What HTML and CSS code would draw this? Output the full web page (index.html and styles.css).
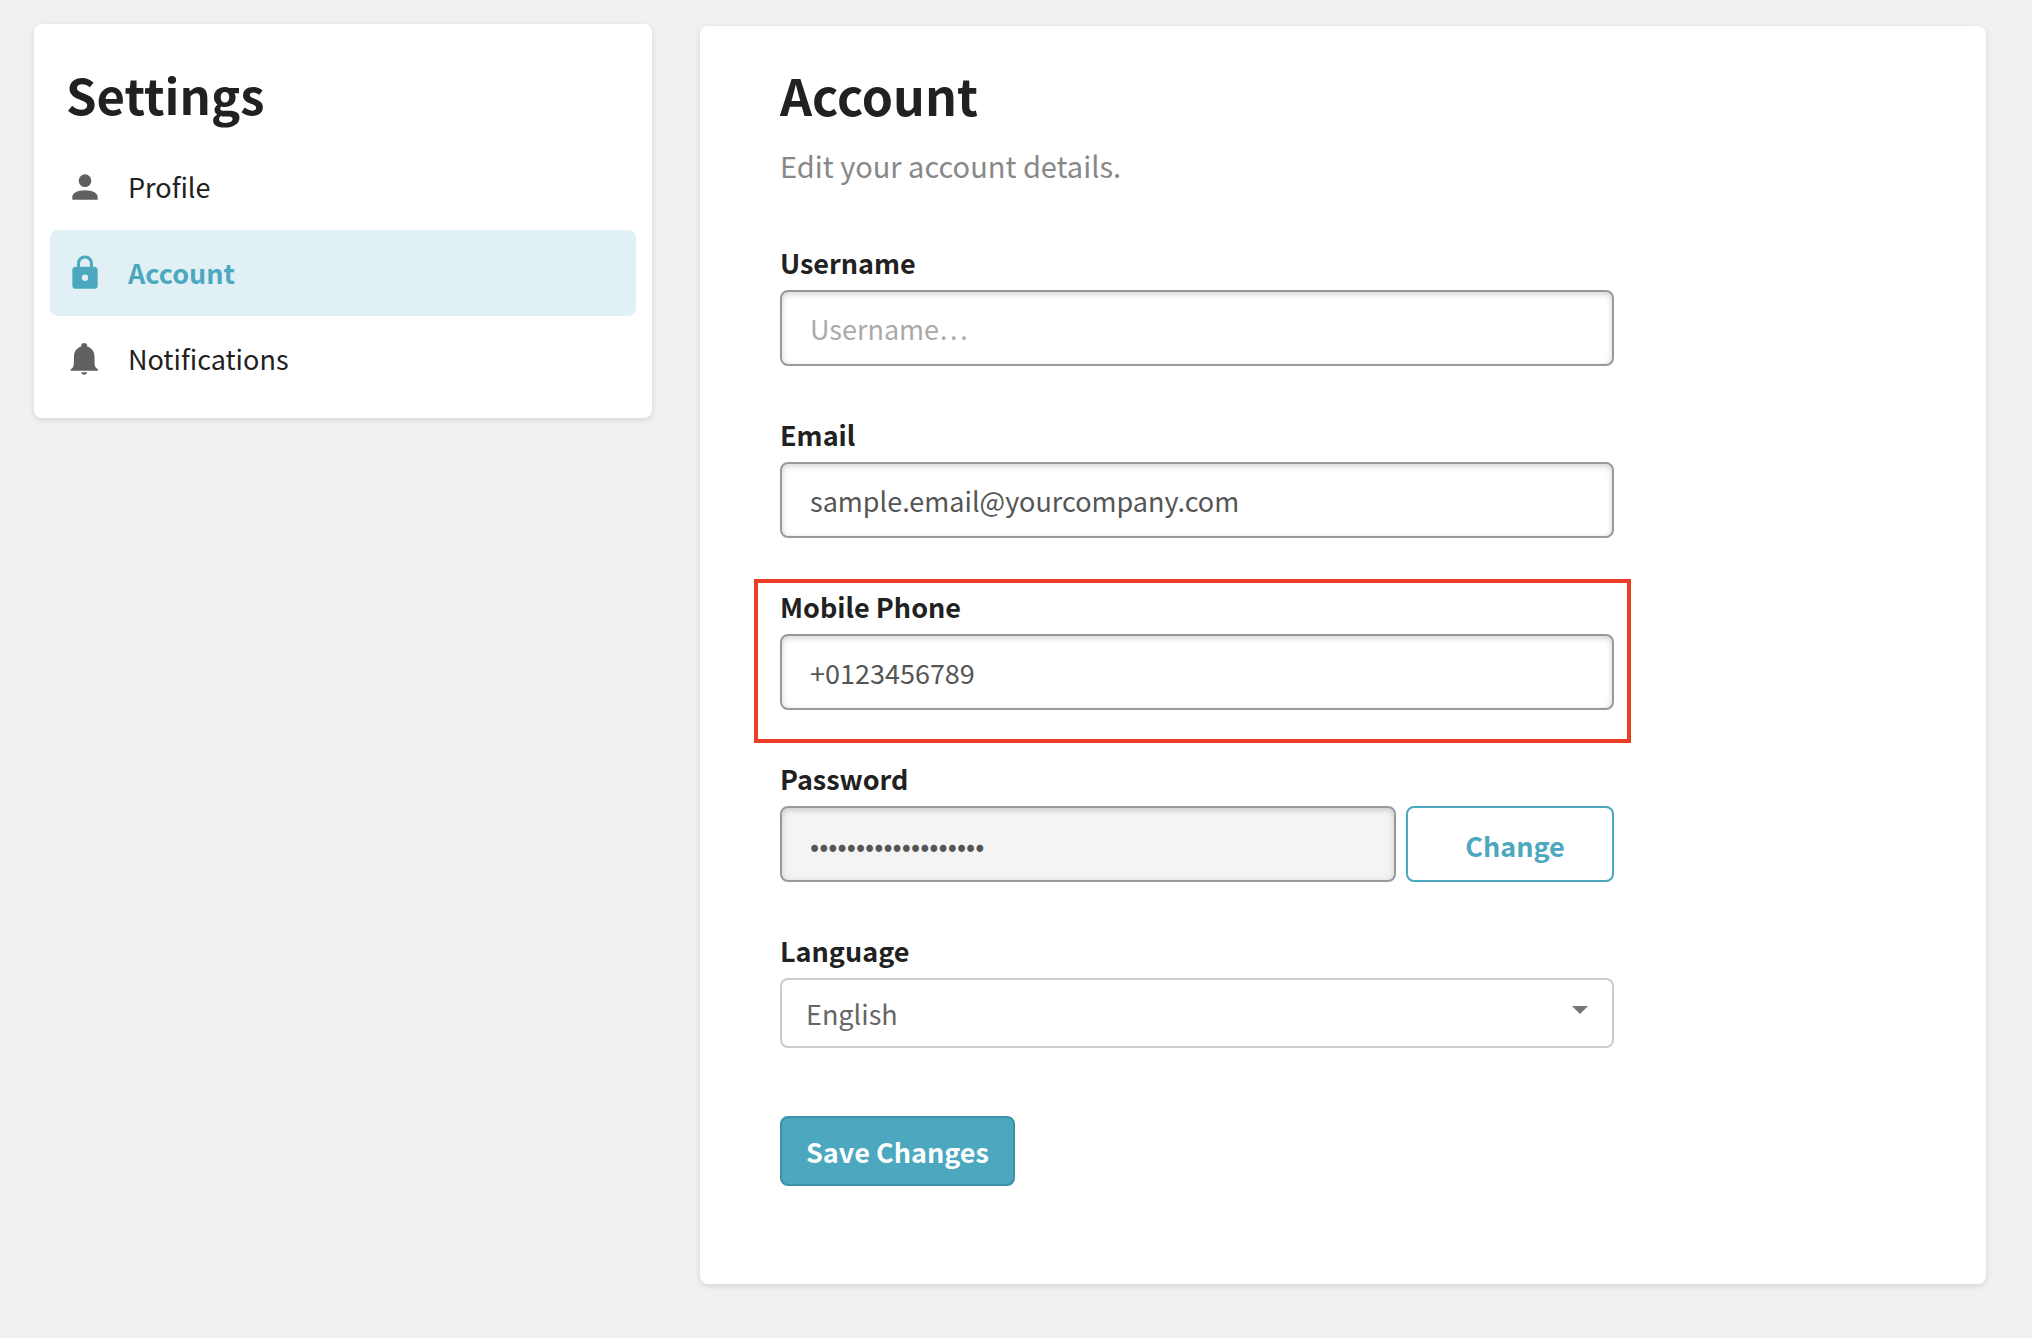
FILE: index.html
```html
<!DOCTYPE html>
<html lang="en">
<head>
    <meta charset="UTF-8">
    <meta name="viewport" content="width=device-width, initial-scale=1.0">
    <title>Account Settings</title>
    <link rel="stylesheet" href="styles.css">
</head>
<body>
    <div class="settings-page">
        <aside class="card sidebar">
            <h2 class="sidebar-title">Settings</h2>
            <nav class="sidebar-nav">
                <a class="nav-item" href="#profile">
                    <svg class="nav-icon" viewBox="0 0 24 24" aria-hidden="true">
                        <path d="M12 4a4 4 0 1 0 0 8 4 4 0 0 0 0-8zM12 14c-4.4 0-8 1.8-8 4v2h16v-2c0-2.200-3.600-4-8-4z"/>
                    </svg>
                    <span class="nav-label">Profile</span>
                </a>
                <a class="nav-item active" href="#account">
                    <svg class="nav-icon" viewBox="0 0 24 24" aria-hidden="true">
                        <path fill-rule="evenodd" d="M18 8h-1V6c0-2.760-2.240-5-5-5S7 3.240 7 6v2H6c-1.100 0-2 .900-2 2v10c0 1.100.900 2 2 2h12c1.100 0 2-.900 2-2V10c0-1.100-.900-2-2-2zM12 17a2 2 0 1 1 0-4 2 2 0 0 1 0 4zM15.100 8H8.900V6c0-1.710 1.390-3.100 3.100-3.100s3.100 1.390 3.100 3.100z"/>
                    </svg>
                    <span class="nav-label">Account</span>
                </a>
                <a class="nav-item" href="#notifications">
                    <svg class="nav-icon" viewBox="0 0 38 38" aria-hidden="true">
                        <path d="M18.200 3c-1.800 0-3 1.300-3 3v.600C10.800 7.800 8 11.700 8 16.500c0 5.500-.100 8-.600 9.800-.400 1.400-1.600 2.300-2.800 3.200v1.300h27.400v-1.300c-1.300-.900-2.500-1.800-2.900-3.200-.500-1.800-.600-4.300-.600-9.800 0-4.800-2.800-8.700-7.300-9.900V6c0-1.700-1.200-3-3-3zM15.200 32.200h6c-.200 1.500-1.500 2.500-3 2.500s-2.800-1-3-2.500z"/>
                    </svg>
                    <span class="nav-label">Notifications</span>
                </a>
            </nav>
        </aside>

        <main class="card content">
            <h1 class="content-title">Account</h1>
            <p class="content-subtitle">Edit your account details.</p>

            <form class="account-form">
                <div class="form-group">
                    <label for="username">Username</label>
                    <input class="text-input" type="text" id="username" placeholder="Username…">
                </div>
                <div class="form-group">
                    <label for="email">Email</label>
                    <input class="text-input" type="email" id="email" value="sample.email@yourcompany.com">
                </div>
                <div class="form-group highlighted">
                    <label for="phone">Mobile Phone</label>
                    <input class="text-input" type="tel" id="phone" value="+0123456789">
                </div>
                <div class="form-group">
                    <label for="password">Password</label>
                    <div class="input-row">
                        <input class="text-input password-input" type="password" id="password" value="samplepassword12345" disabled>
                        <button type="button" class="btn btn-outline">Change</button>
                    </div>
                </div>
                <div class="form-group">
                    <label for="language">Language</label>
                    <div class="select-wrap">
                        <select class="select-input" id="language">
                            <option selected>English</option>
                        </select>
                    </div>
                </div>
                <button type="submit" class="btn btn-primary">Save Changes</button>
            </form>
        </main>
    </div>
</body>
</html>
```
FILE: styles.css
```css
* {
    box-sizing: border-box;
}
body {
    margin: 0;
    background-color: #f0f1f3;
    color: #212121;
    font-family: "Noto Sans CJK KR", "Noto Sans", sans-serif;
    font-size: 27px;
}
.settings-page {
    display: grid;
    grid-template-columns: 618fr 1286fr;
    gap: 48px;
    align-items: start;
    padding: 24px 46px 48px 34px;
}
.card {
    background-color: #fff;
    border-radius: 8px;
    box-shadow: 0 2px 6px rgba(0, 0, 0, 0.12);
}

/* Sidebar */
.sidebar {
    padding: 38px 16px 16px;
}
.sidebar-title,
.content-title {
    margin: 0;
    font-size: 50px;
    line-height: 64px;
    font-weight: 700;
}
.sidebar-title {
    margin-bottom: 18px;
    padding-left: 16px;
    font-size: 49px;
}
.nav-item {
    display: flex;
    align-items: center;
    gap: 24px;
    height: 86px;
    padding: 0 16px;
    border-radius: 8px;
    color: #212121;
    text-decoration: none;
}
.nav-icon {
    width: 38px;
    height: 38px;
    fill: #5f6062;
}
.nav-label {
    padding-bottom: 2px;
}
.nav-item.active {
    background-color: #e1f0f5;
    color: #4ba8bf;
    font-weight: 600;
}
.nav-item.active .nav-icon {
    fill: #4ba8bf;
}

/* Account panel */
.content {
    margin-top: 2px;
    padding: 36px 80px 98px;
}
.content-subtitle {
    margin: 17px 0 53px;
    color: #888;
    font-size: 29px;
    line-height: 44px;
}
.account-form {
    max-width: 834px;
}
.form-group {
    margin-bottom: 46px;
}
.form-group label {
    display: block;
    margin-bottom: 4px;
    font-weight: 700;
    line-height: 46px;
}
.highlighted {
    position: relative;
}
.highlighted::before {
    content: "";
    position: absolute;
    inset: -5px -17px -33px -26px;
    border: 4px solid #eb3f25;
    pointer-events: none;
}
.text-input,
.select-input {
    display: block;
    width: 100%;
    height: 76px;
    padding: 0 28px;
    border: 2px solid #999;
    border-radius: 8px;
    background-color: #fff;
    box-shadow: inset 0 2px 6px rgba(0, 0, 0, 0.18);
    color: #555;
    font-family: inherit;
    font-size: 27px;
}
.text-input::placeholder {
    color: #aaa;
}
.text-input:disabled {
    background-color: #f4f4f4;
}
.input-row {
    display: flex;
    gap: 10px;
}
.password-input {
    flex: 1;
    min-width: 0;
}
.select-wrap {
    position: relative;
    margin-bottom: 68px;
}
.select-wrap::after {
    content: "";
    position: absolute;
    top: 28px;
    right: 26px;
    border: 8px solid transparent;
    border-top-color: #757575;
    border-bottom: 0;
    pointer-events: none;
}
.select-input {
    height: 70px;
    padding: 0 24px;
    border-color: #ccc;
    box-shadow: none;
    color: #666;
    appearance: none;
}
.btn {
    border: 2px solid #4ba8bf;
    border-radius: 8px;
    font-family: inherit;
    font-size: 27px;
    font-weight: 700;
    cursor: pointer;
}
.btn-outline {
    width: 208px;
    padding: 2px 0 0 10px;
    background-color: #fff;
    color: #4ba8bf;
}
.btn-primary {
    height: 70px;
    padding: 0 24px;
    background-color: #4ba8bf;
    border-color: #3b93a9;
    color: #fff;
}
```
